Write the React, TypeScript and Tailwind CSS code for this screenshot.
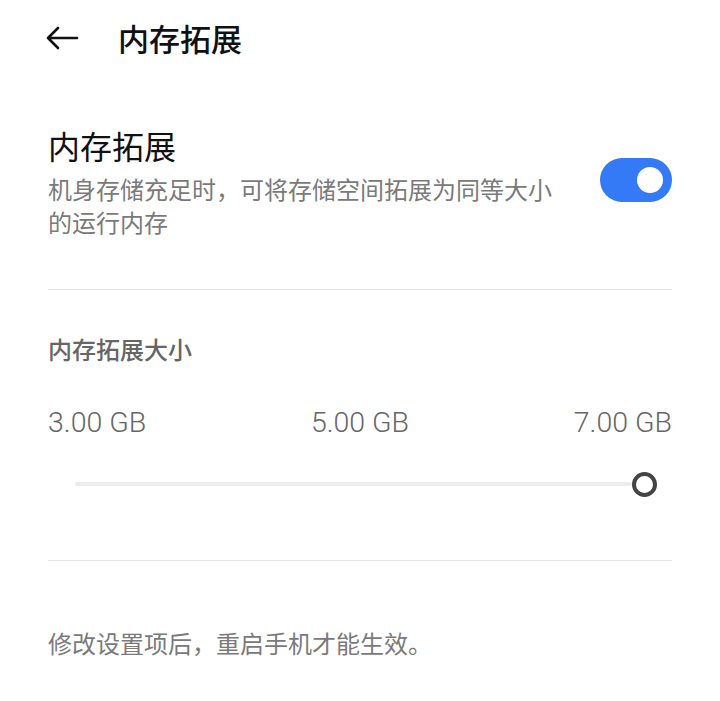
import React, { useState } from 'react';

const cjk = "font-['Noto_Sans_CJK_SC','Noto_Sans',sans-serif]";

const App: React.FC = () => {
  const [enabled, setEnabled] = useState(true);

  return (
    <div className={`w-[720px] h-[701px] bg-white overflow-hidden ${cjk}`}>
      {/* Top bar */}
      <div className="h-[76px] flex items-center pl-[46px]">
        <svg width="33" height="24" viewBox="0 0 33 24" fill="none" stroke="#111" strokeWidth="2.6" strokeLinecap="round" strokeLinejoin="round">
          <path d="M2 12h29M12 2L2 12l10 10" />
        </svg>
        <span className="ml-[39px] text-[31px] leading-[40px] font-medium text-[#111]">内存拓展</span>
      </div>

      <div className="px-12">
        {/* Toggle row */}
        <div className="mt-[49px] flex justify-between">
          <div className="w-[520px]">
            <div className="text-[32px] leading-[40px] text-[#111]">内存拓展</div>
            <div className="mt-[7px] text-[24px] leading-[33px] text-[#7a7a7a]">
              机身存储充足时，可将存储空间拓展为同等大小的运行内存
            </div>
          </div>
          <button
            onClick={() => setEnabled(!enabled)}
            className={`mt-[33px] w-[72px] h-[44px] rounded-full flex items-center px-[9px] ${enabled ? 'bg-[#3479f6] justify-end' : 'bg-[#d9d9d9] justify-start'}`}
          >
            <span className="w-[26px] h-[26px] rounded-full bg-white" />
          </button>
        </div>

        <div className="mt-[51px] h-px bg-[#e6e6e6]" />

        {/* Size section */}
        <div className="mt-[43px] text-[24px] leading-[32px] font-medium text-[#666]">内存拓展大小</div>

        <div className="mt-[40px] flex justify-between text-[28.5px] leading-[36px] font-light text-[#666] font-['Roboto',sans-serif]">
          <span>3.00 GB</span>
          <span>5.00 GB</span>
          <span>7.00 GB</span>
        </div>

        <div className="mt-[23px] h-[40px] flex items-center pl-[27px] pr-[15px]">
          <div className="flex-1 h-[4px] rounded-full bg-[#ececec]" />
          <div className="w-[25px] h-[25px] rounded-full border-[4px] border-[#444] bg-white" />
        </div>

        <div className="mt-[56px] h-px bg-[#e6e6e6]" />

        <div className="mt-[66px] text-[24px] leading-[32px] text-[#7a7a7a]">修改设置项后，重启手机才能生效。</div>
      </div>
    </div>
  );
};

export default App;
